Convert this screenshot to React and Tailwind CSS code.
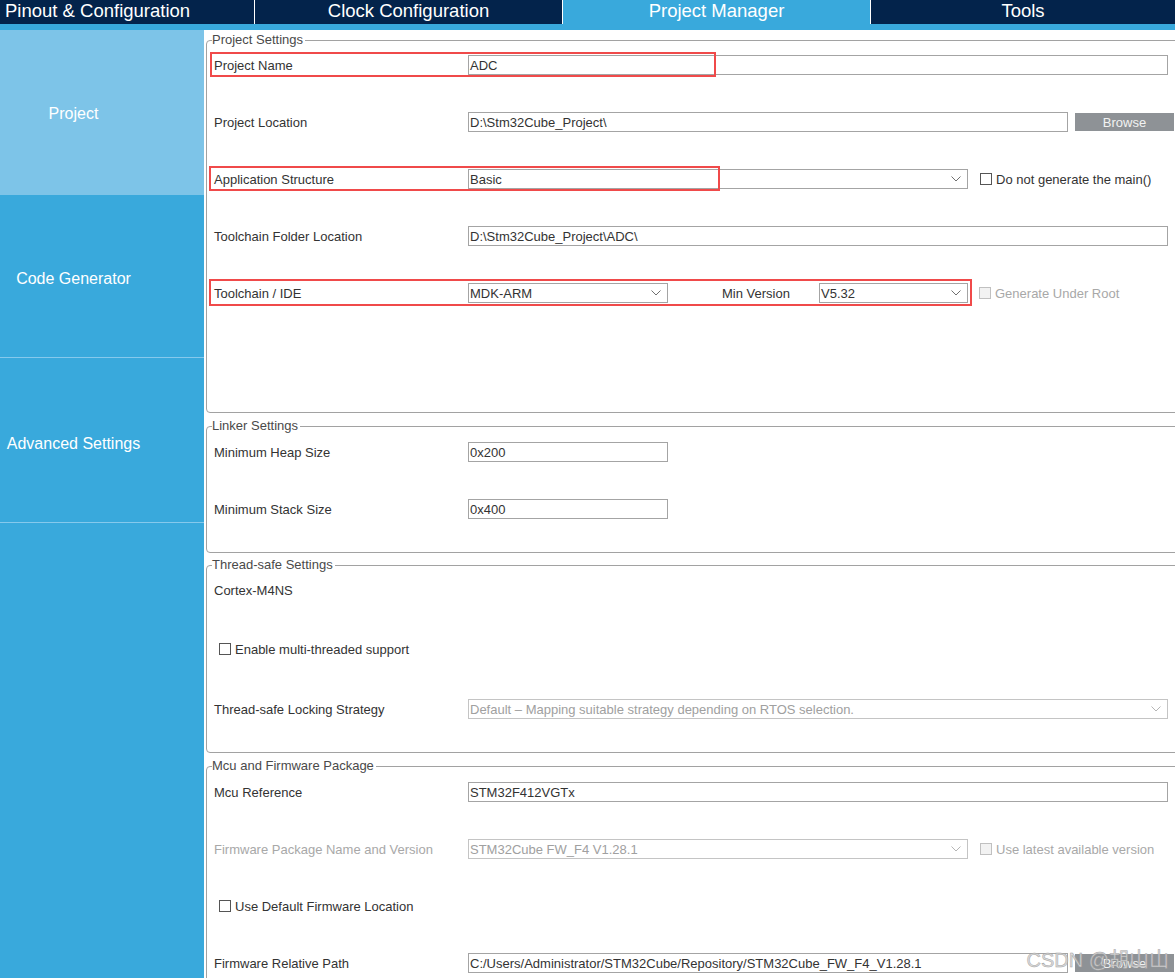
import React from "react";

const FONT = { fontFamily: '"Liberation Sans", Arial, sans-serif' };

function Chevron({ disabled }) {
  return (
    <svg width="10" height="6" viewBox="0 0 10 6" className="shrink-0">
      <polyline points="0.5,0.5 5,5 9.5,0.5" fill="none" stroke={disabled ? "#b5b5b5" : "#707070"} strokeWidth="1" />
    </svg>
  );
}

function Input({ value, w, disabled }) {
  return (
    <div
      className={`h-[20px] shrink-0 border bg-white flex items-center pl-[1px] text-[13px] leading-none ${disabled ? "border-[#c4c4c4] text-[#a0a0a0]" : "border-[#a4a4a4] text-[#333]"}`}
      style={{ width: w }}
    >
      {value}
    </div>
  );
}

function Select({ value, w, disabled }) {
  return (
    <div
      className={`h-[20px] shrink-0 border bg-white flex items-center justify-between pl-[1px] pr-[6px] text-[13px] leading-none ${disabled ? "border-[#c4c4c4] text-[#a0a0a0]" : "border-[#a4a4a4] text-[#333]"}`}
      style={{ width: w }}
    >
      <span>{value}</span>
      <Chevron disabled={disabled} />
    </div>
  );
}

function Check({ label, disabled }) {
  return (
    <div className="flex items-center gap-[4px]">
      <span className={`w-[12px] h-[12px] border ${disabled ? "border-[#c0c0c0] bg-[#f2f2f2]" : "border-[#555] bg-white"}`} />
      <span className={`text-[13px] leading-none ${disabled ? "text-[#a8a8a8]" : "text-[#333]"}`}>{label}</span>
    </div>
  );
}

function Browse() {
  return (
    <div className="ml-[7px] w-[99px] h-[18px] shrink-0 bg-[#8e9296] text-[#f2f2f2] text-[13px] leading-none flex items-center justify-center">
      Browse
    </div>
  );
}

function Row({ label, disabled, children, box }) {
  return (
    <div className="relative flex items-center h-[20px]">
      <div className={`w-[254px] shrink-0 text-[13px] leading-none ${disabled ? "text-[#a8a8a8]" : "text-[#333]"}`}>{label}</div>
      {children}
      {box}
    </div>
  );
}

function RedBox({ className }) {
  return <div className={`absolute border-2 border-[#f04a4a] pointer-events-none ${className}`} />;
}

function Group({ title, className, children, pad }) {
  return (
    <fieldset className={`border border-[#a2a2a2] rounded-[4px] ${className}`}>
      <legend className="ml-[5px] pr-[2px] text-[13px] leading-[16px] text-[#4a4a4a]">{title}</legend>
      <div className={`pl-[7px] flex flex-col ${pad}`}>{children}</div>
    </fieldset>
  );
}

export default function App() {
  return (
    <div className="relative w-[1175px] h-[978px] overflow-hidden bg-white flex flex-col" style={FONT}>
      {/* Top tabs */}
      <div className="h-[24px] flex bg-[#03234b] text-white text-[18.5px] leading-none shrink-0">
        <div className="w-[254px] flex items-center pl-[5px] pb-[2px] whitespace-nowrap">Pinout &amp; Configuration</div>
        <div className="w-[308px] border-l border-white flex items-center justify-center pb-[2px]">Clock Configuration</div>
        <div className="w-[308px] border-l border-white bg-[#39a9dc] flex items-center justify-center pb-[2px]">Project Manager</div>
        <div className="flex-1 border-l border-white flex items-center justify-center pb-[2px]">Tools</div>
      </div>
      <div className="h-[6px] bg-[#39a9dc] shrink-0" />

      <div className="flex flex-1 min-h-0">
        {/* Sidebar */}
        <div className="w-[204px] shrink-0 bg-[#39a9dc] flex flex-col text-white text-[16px] leading-none">
          <div className="h-[165px] bg-[#7dc4e8] flex items-center pt-[2px]">
            <div className="w-[147px] text-center">Project</div>
          </div>
          <div className="h-[163px] border-b border-[#86c9ec] flex items-center pt-[5px]">
            <div className="w-[147px] text-center">Code Generator</div>
          </div>
          <div className="h-[165px] border-b border-[#86c9ec] flex items-center pt-[7px]">
            <div className="w-[147px] text-center">Advanced Settings</div>
          </div>
        </div>

        {/* Main */}
        <div className="w-[975px] shrink-0 pl-[2px] flex flex-col">
          <Group title="Project Settings" className="mt-[2px]" pad="pt-[7px] pb-[109px] gap-[37px]">
            <Row label="Project Name" box={<RedBox className="left-[-4px] top-[-3px] w-[506px] h-[25px]" />}>
              <Input value="ADC" w={700} />
            </Row>
            <Row label="Project Location">
              <Input value="D:\Stm32Cube_Project\" w={600} />
              <Browse />
            </Row>
            <Row label="Application Structure" box={<RedBox className="left-[-5px] top-[-3px] w-[511px] h-[25px]" />}>
              <Select value="Basic" w={500} />
              <div className="ml-[12px]">
                <Check label="Do not generate the main()" />
              </div>
            </Row>
            <Row label="Toolchain Folder Location">
              <Input value="D:\Stm32Cube_Project\ADC\" w={700} />
            </Row>
            <Row label="Toolchain / IDE" box={<RedBox className="left-[-5px] top-[-4px] w-[763px] h-[27px]" />}>
              <Select value="MDK-ARM" w={200} />
              <div className="w-[151px] pl-[54px] text-[13px] leading-none text-[#333] shrink-0">Min Version</div>
              <Select value="V5.32" w={149} />
              <div className="ml-[11px]">
                <Check label="Generate Under Root" disabled />
              </div>
            </Row>
          </Group>

          <Group title="Linker Settings" className="mt-[5px]" pad="pt-[8px] pb-[33px] gap-[37px]">
            <Row label="Minimum Heap Size">
              <Input value="0x200" w={200} />
            </Row>
            <Row label="Minimum Stack Size">
              <Input value="0x400" w={200} />
            </Row>
          </Group>

          <Group title="Thread-safe Settings" className="mt-[4px]" pad="pt-[7px] pb-[33px]">
            <Row label="Cortex-M4NS" />
            <div className="mt-[39px] h-[20px] flex items-center pl-[5px]">
              <Check label="Enable multi-threaded support" />
            </div>
            <div className="mt-[40px]">
              <Row label="Thread-safe Locking Strategy">
                <Select value="Default – Mapping suitable strategy depending on RTOS selection." w={700} disabled />
              </Row>
            </div>
          </Group>

          <Group title="Mcu and Firmware Package" className="mt-[5px]" pad="pt-[8px] pb-[40px] gap-[37px]">
            <Row label="Mcu Reference">
              <Input value="STM32F412VGTx" w={700} />
            </Row>
            <Row label="Firmware Package Name and Version" disabled>
              <Select value="STM32Cube FW_F4 V1.28.1" w={500} disabled />
              <div className="ml-[12px]">
                <Check label="Use latest available version" disabled />
              </div>
            </Row>
            <div className="h-[20px] flex items-center pl-[5px]">
              <Check label="Use Default Firmware Location" />
            </div>
            <Row label="Firmware Relative Path">
              <Input value="C:/Users/Administrator/STM32Cube/Repository/STM32Cube_FW_F4_V1.28.1" w={600} />
              <Browse />
            </Row>
          </Group>
        </div>
      </div>

      {/* watermark */}
      <div
        className="absolute right-[6px] bottom-[8px] text-[20px] leading-none text-[#d8d8d8] opacity-90"
        style={{ fontFamily: '"Liberation Sans", "Noto Sans CJK SC", sans-serif', WebkitTextStroke: "0.5px #9a9a9a" }}
      >
        CSDN @胡山山
      </div>
    </div>
  );
}
